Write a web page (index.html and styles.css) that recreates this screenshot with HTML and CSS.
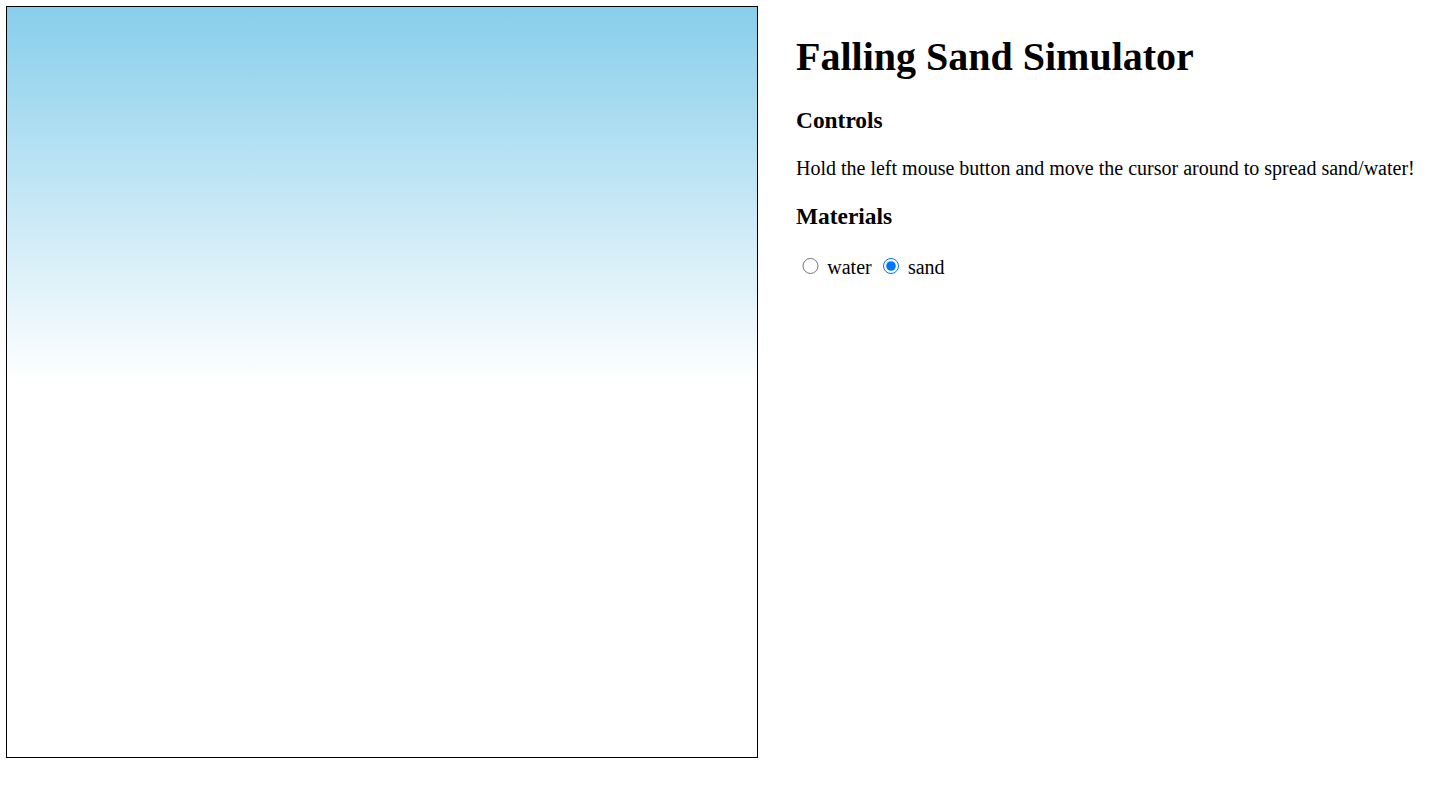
FILE: index.html
```html
<!DOCTYPE html>
<html>
<head>
<meta charset="utf-8">
<title>Falling Sand Simulator</title>
<link rel="stylesheet" href="styles.css">
</head>
<body>
<div class="layout">
  <div class="canvas"></div>
  <div class="panel">
    <h1>Falling Sand Simulator</h1>
    <h3>Controls</h3>
    <p>Hold the left mouse button and move the cursor around to spread sand/water!</p>
    <h3>Materials</h3>
    <div class="materials">
      <input type="radio" id="water" name="material" value="water">
      <label for="water">water</label>
      <input type="radio" id="sand" name="material" value="sand" checked>
      <label for="sand">sand</label>
    </div>
  </div>
</div>
</body>
</html>
```

FILE: styles.css
```css
html, body {
  margin: 0;
  padding: 0;
  background: #fff;
}
body {
  font-family: "Liberation Serif", "Times New Roman", serif;
  font-size: 20px;
  color: #000;
}
.layout {
  display: flex;
  align-items: flex-start;
  padding: 6px;
}
.canvas {
  width: 750px;
  height: 750px;
  border: 1px solid #000;
  background: linear-gradient(to bottom, #87ceeb 0%, #ffffff 50%, #ffffff 100%);
  flex: none;
}
.panel {
  padding-left: 38px;
}
h1 {
  font-size: 40px;
  margin: 26.8px 0;
}
h3 {
  font-size: 23.4px;
  margin: 23.4px 0;
}
p {
  margin: 20px 0;
}
.materials input {
  width: 16.25px;
  height: 16.25px;
  margin: 3.75px 3.75px 0 6.25px;
}
```
